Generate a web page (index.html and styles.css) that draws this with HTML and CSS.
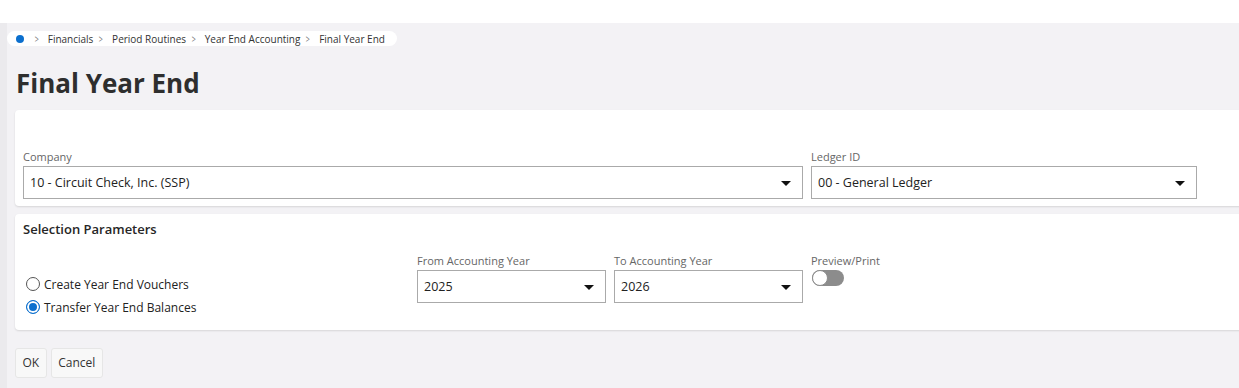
FILE: index.html
```html
<!DOCTYPE html>
<html lang="en">
<head>
  <meta charset="UTF-8">
  <meta name="viewport" content="width=device-width, initial-scale=1.0">
  <title>Final Year End</title>
  <link rel="stylesheet" href="styles.css">
</head>
<body>
  <div class="topbar"></div>
  <div class="app">
    <!-- breadcrumb -->
    <nav class="crumbs">
      <span class="home-dot"></span>
      <span class="sep">&gt;</span><span>Financials</span>
      <span class="sep">&gt;</span><span>Period Routines</span>
      <span class="sep">&gt;</span><span>Year End Accounting</span>
      <span class="sep">&gt;</span><span>Final Year End</span>
    </nav>

    <h1 class="page-title">Final Year End</h1>

    <!-- header card -->
    <div class="card card-head">
      <div class="grid">
        <div class="field span4">
          <label>Company</label>
          <div class="select">10 - Circuit Check, Inc. (SSP)<span class="caret"></span></div>
        </div>
        <div class="field span2">
          <label>Ledger ID</label>
          <div class="select">00 - General Ledger<span class="caret"></span></div>
        </div>
      </div>
    </div>

    <!-- selection parameters -->
    <div class="card card-params">
      <h2 class="card-title">Selection Parameters</h2>
      <div class="grid">
        <div class="radios span2">
          <label class="radio"><span class="dot"></span>Create Year End Vouchers</label>
          <label class="radio"><span class="dot on"></span>Transfer Year End Balances</label>
        </div>
        <div class="field">
          <label>From Accounting Year</label>
          <div class="select">2025<span class="caret"></span></div>
        </div>
        <div class="field">
          <label>To Accounting Year</label>
          <div class="select">2026<span class="caret"></span></div>
        </div>
        <div class="field">
          <label>Preview/Print</label>
          <span class="toggle"><span class="knob"></span></span>
        </div>
      </div>
    </div>

    <div class="actions">
      <button class="btn">OK</button>
      <button class="btn">Cancel</button>
    </div>
  </div>
</body>
</html>
```

FILE: styles.css
```css
html, body { margin: 0; padding: 0; overflow: hidden; }
body { font-family: "Open Sans", "Liberation Sans", sans-serif; color: #262626; background: #fff; }
.topbar { height: 23px; background: #fff; }
.app { background: #f3f2f5; border-left: 7px solid #ebeaed; height: 365px; }

.crumbs { display: inline-flex; align-items: center; margin-top: 8px; height: 15px; padding: 0 12px 0 9px; background: #fff; border-radius: 8px; font-size: 10px; color: #333; }
.home-dot { width: 8px; height: 8px; border-radius: 50%; background: #0b6fce; margin-right: 5px; }
.sep { color: #777; margin: 0 8px 0 5px; font-size: 10px; transform: scaleX(0.7); }

.page-title { margin: 19px 0 11px 9px; font-size: 26px; line-height: 32px; font-weight: 700; color: #2e2e2e; }

.card { background: #fff; border-radius: 4px; margin: 0 -30px 8px 8px; padding: 0 8px; box-shadow: 0 1px 2px rgba(0,0,0,0.12); }
.card-head { padding-top: 40px; padding-bottom: 7px; }
.card-params { padding-top: 6px; padding-bottom: 11px; }
.card-title { margin: 0 0 16px; font-size: 13px; line-height: 18px; font-weight: 600; color: #262626; }

.grid { display: grid; grid-template-columns: repeat(6, 189px); column-gap: 8px; align-items: start; }
.span2 { grid-column: span 2; }
.span4 { grid-column: span 4; }

.field label { display: block; font-size: 11px; line-height: 14px; color: #666; margin-bottom: 2px; }
.select { position: relative; height: 31px; border: 1px solid #aaa; padding-left: 6px; font-size: 12.5px; line-height: 31px; color: #222; }
.caret { position: absolute; right: 11px; top: 14px; width: 0; height: 0; border-left: 5px solid transparent; border-right: 5px solid transparent; border-top: 5px solid #111; }

.radios { padding-top: 19px; }
.radio { display: flex; align-items: center; height: 23px; font-size: 12px; color: #222; padding-left: 3px; }
.dot { width: 12px; height: 12px; border: 1px solid #555; border-radius: 50%; margin-right: 4px; box-sizing: content-box; }
.dot.on { border-color: #0b6fce; background: #0b6fce; box-shadow: inset 0 0 0 2px #fff; }

.toggle { display: block; position: relative; width: 32px; height: 16px; margin: 1px 0 0 1px; background: #8c8c8c; border-radius: 8px; }
.knob { position: absolute; left: 0; top: 0; width: 14px; height: 14px; border: 1px solid #8c8c8c; border-radius: 50%; background: #fff; }

.actions { display: flex; gap: 4px; margin: 18px 0 0 8px; }
.btn { height: 30px; padding: 0 6.5px; font-family: inherit; font-size: 12px; color: #333; background: #f8f8f8; border: 1px solid #e6e6e6; border-radius: 3px; }
```
